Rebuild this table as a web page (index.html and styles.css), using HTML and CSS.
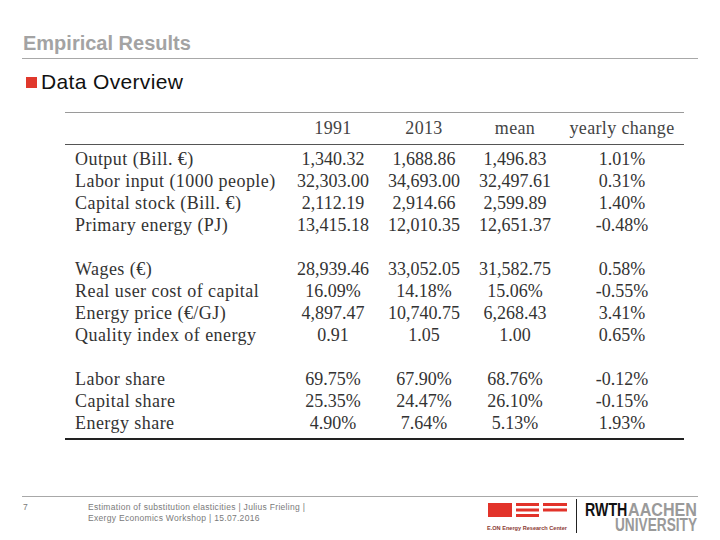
FILE: index.html
```html
<!DOCTYPE html>
<html lang="en">
<head>
<meta charset="utf-8">
<title>Empirical Results</title>
<link rel="stylesheet" href="styles.css">
</head>
<body>
<div class="slide">
  <header class="slide-header"><h1>Empirical Results</h1></header>
  <h2 class="section"><span class="bullet"></span>Data Overview</h2>
  <table class="data">
    <colgroup>
      <col class="c-label"><col class="c-num"><col class="c-num2"><col class="c-num"><col class="c-chg">
    </colgroup>
    <thead>
      <tr><th></th><th>1991</th><th>2013</th><th>mean</th><th>yearly change</th></tr>
    </thead>
    <tbody>
      <tr class="first"><td>Output (Bill. €)</td><td>1,340.32</td><td>1,688.86</td><td>1,496.83</td><td>1.01%</td></tr>
      <tr><td>Labor input (1000 people)</td><td>32,303.00</td><td>34,693.00</td><td>32,497.61</td><td>0.31%</td></tr>
      <tr><td>Capital stock (Bill. €)</td><td>2,112.19</td><td>2,914.66</td><td>2,599.89</td><td>1.40%</td></tr>
      <tr><td>Primary energy (PJ)</td><td>13,415.18</td><td>12,010.35</td><td>12,651.37</td><td>-0.48%</td></tr>
      <tr class="gap"><td colspan="5"></td></tr>
      <tr><td>Wages (€)</td><td>28,939.46</td><td>33,052.05</td><td>31,582.75</td><td>0.58%</td></tr>
      <tr><td>Real user cost of capital</td><td>16.09%</td><td>14.18%</td><td>15.06%</td><td>-0.55%</td></tr>
      <tr><td>Energy price (€/GJ)</td><td>4,897.47</td><td>10,740.75</td><td>6,268.43</td><td>3.41%</td></tr>
      <tr><td>Quality index of energy</td><td>0.91</td><td>1.05</td><td>1.00</td><td>0.65%</td></tr>
      <tr class="gap"><td colspan="5"></td></tr>
      <tr><td>Labor share</td><td>69.75%</td><td>67.90%</td><td>68.76%</td><td>-0.12%</td></tr>
      <tr><td>Capital share</td><td>25.35%</td><td>24.47%</td><td>26.10%</td><td>-0.15%</td></tr>
      <tr class="last"><td>Energy share</td><td>4.90%</td><td>7.64%</td><td>5.13%</td><td>1.93%</td></tr>
    </tbody>
  </table>
  <footer class="slide-footer">
    <div class="page-num">7</div>
    <div class="foot-text">Estimation of substitution elasticities | Julius Frieling |<br>Exergy Economics Workshop | 15.07.2016</div>
    <svg class="logos" width="213" height="36" viewBox="0 0 213 36" aria-label="E.ON Energy Research Center and RWTH Aachen University">
      <rect x="3" y="5" width="24" height="14" fill="#e2332a"/>
      <rect x="31" y="5" width="23" height="3" fill="#e2332a"/>
      <rect x="31" y="10.5" width="23" height="3" fill="#e2332a"/>
      <rect x="31" y="16" width="23" height="3" fill="#e2332a"/>
      <rect x="58" y="5" width="24" height="3" fill="#e2332a"/>
      <rect x="58" y="10.5" width="24" height="3" fill="#e2332a"/>
      <text x="2" y="32" class="erc" textLength="80" lengthAdjust="spacingAndGlyphs">E.ON Energy Research Center</text>
      <rect x="91" y="1" width="1" height="34" fill="#222"/>
      <g transform="translate(100 17.5) scale(0.79 1)"><text x="0" y="0" class="rwth">RWTH</text></g>
      <g transform="translate(143 17.5) scale(0.895 1)"><text x="0" y="0" class="aachen">AACHEN</text></g>
      <g transform="translate(130 33) scale(0.76 1)"><text x="0" y="0" class="aachen">UNIVERSITY</text></g>
    </svg>
  </footer>
</div>
</body>
</html>
```

FILE: styles.css
```css
html, body {
  margin: 0;
  padding: 0;
  background: #ffffff;
}

.slide {
  width: 720px;
  height: 540px;
  box-sizing: border-box;
  padding: 0 22px;
  display: flex;
  flex-direction: column;
  font-family: "Liberation Sans", Arial, sans-serif;
}

.slide-header {
  padding-top: 31px;
  padding-bottom: 3px;
  border-bottom: 1px solid #a8a8a8;
}

.slide-header h1 {
  margin: 0 0 0 1px;
  font-size: 20px;
  line-height: 24px;
  font-weight: bold;
  color: #a3a3a3;
}

.section {
  margin: 11px 0 0 4px;
  display: flex;
  align-items: center;
  font-size: 21px;
  line-height: 24px;
  font-weight: normal;
  letter-spacing: 0.35px;
  color: #111;
}

.bullet {
  width: 11px;
  height: 11px;
  background: #e0382c;
  margin-right: 4px;
}

.data {
  margin: 18px 0 0 43px;
  width: 619px;
  border-collapse: collapse;
  table-layout: fixed;
  font-family: "Liberation Serif", "Times New Roman", serif;
  font-size: 18px;
  color: #333;
  border-top: 1px solid #9a9a9a;
  border-bottom: 2px solid #222;
}

.c-label { width: 223px; }
.c-num { width: 90px; }
.c-num2 { width: 92px; }
.c-chg { width: 124px; }

.data thead th {
  height: 31px;
  padding: 0;
  font-weight: normal;
  text-align: center;
  color: #444;
  letter-spacing: 0.35px;
  border-bottom: 1px solid #555;
  vertical-align: middle;
}

.data td {
  height: 22px;
  padding: 0;
  line-height: 22px;
  text-align: center;
  white-space: nowrap;
}

.data td:first-child {
  text-align: left;
  padding-left: 10px;
  letter-spacing: 0.45px;
}

.data tr.first td {
  padding-top: 3px;
}

.data tr.last td {
  padding-bottom: 4px;
}

.data tr.gap td {
  height: 22px;
}

.slide-footer {
  margin-top: auto;
  height: 43px;
  border-top: 1px solid #a8a8a8;
  display: flex;
  align-items: flex-start;
  font-size: 8.5px;
  line-height: 11px;
  color: #7a7a7a;
}

.page-num {
  width: 66px;
  padding: 5px 0 0 1px;
  box-sizing: border-box;
}

.foot-text {
  flex: 1;
  padding-top: 5px;
  letter-spacing: 0.3px;
}

.logos {
  margin-top: 1px;
  display: block;
}

.logos .erc {
  font-family: "Liberation Sans", Arial, sans-serif;
  font-size: 5.5px;
  font-weight: bold;
  fill: #8a3a33;
}

.logos .rwth {
  font-family: "Liberation Sans", Arial, sans-serif;
  font-size: 18px;
  font-weight: bold;
  fill: #111;
}

.logos .aachen {
  font-family: "Liberation Sans", Arial, sans-serif;
  font-size: 18px;
  font-weight: bold;
  fill: #9a9a9a;
}
```
